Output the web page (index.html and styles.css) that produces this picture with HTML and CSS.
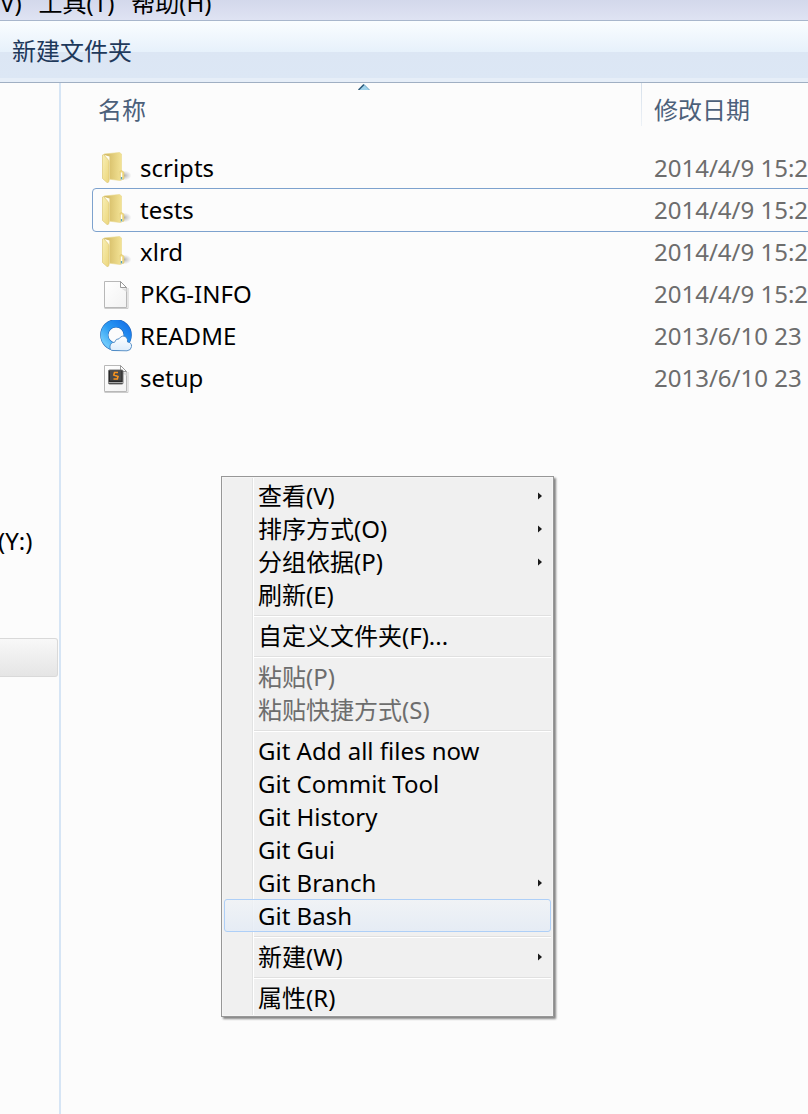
FILE: index.html
```html
<!DOCTYPE html>
<html lang="zh-CN">
<head>
<meta charset="utf-8">
<meta name="viewport" content="width=device-width, initial-scale=1">
<title>xlrd</title>
<link rel="stylesheet" href="styles.css">
</head>
<body>
<svg class="defs" width="0" height="0" aria-hidden="true">
  <defs>
    <linearGradient id="folderFront" x1="0" y1="0" x2="1" y2="1">
      <stop offset="0" stop-color="#f8efb4"/><stop offset="1" stop-color="#ecd67c"/>
    </linearGradient>
    <linearGradient id="folderBack" x1="0" y1="0" x2="1" y2="0">
      <stop offset="0" stop-color="#cdb25c"/><stop offset="0.4" stop-color="#dfc976"/><stop offset="1" stop-color="#f7e89c"/>
    </linearGradient>
    <radialGradient id="folderShade">
      <stop offset="0" stop-color="#777" stop-opacity="0.6"/><stop offset="1" stop-color="#999" stop-opacity="0"/>
    </radialGradient>
    <linearGradient id="page" x1="0" y1="0" x2="1" y2="1">
      <stop offset="0" stop-color="#fff"/><stop offset="1" stop-color="#f2f2f2"/>
    </linearGradient>
    <linearGradient id="ring" x1="0" y1="1" x2="1" y2="0">
      <stop offset="0.1" stop-color="#6cc8fb"/><stop offset="0.5" stop-color="#2a9bf3"/><stop offset="1" stop-color="#1672e8"/>
    </linearGradient>
    <linearGradient id="cloud" x1="0" y1="0" x2="0" y2="1">
      <stop offset="0" stop-color="#fff"/><stop offset="1" stop-color="#dcecfb"/>
    </linearGradient>
    <symbol id="icon-folder" viewBox="0 0 32 32">
      <ellipse cx="24" cy="23.500" rx="7.500" ry="5" fill="url(#folderShade)"/>
      <path d="M4 2L19.500 0.500L21.500 2V19L23.500 20V27L20 28.500L8 27Z" fill="url(#folderBack)" stroke="#ead88c" stroke-width="0.600"/>
      <path d="M4.500 3L9.500 4.500V27L8 28L5 26Z" fill="#fffdf0"/>
      <path d="M2.500 3L3.500 2.500L7.500 7Q9 8.500 9 10V29Q8.500 31 7 30.500L2.500 26.500Z" fill="url(#folderFront)" stroke="#dcc775" stroke-width="0.700"/>
      <path d="M20 19L22 18.500L24 20.500V27L20.500 28Z" fill="#efd983" stroke="#dcc066" stroke-width="0.500"/>
      <path d="M21.500 20.500V28" stroke="#fff" stroke-width="1.400"/>
      <path d="M21.500 25V27.500" stroke="#55a3b8" stroke-width="1.300"/>
    </symbol>
    <symbol id="icon-page" viewBox="0 0 32 32">
      <path d="M4.500 30.500H28V10" fill="none" stroke="#ccc"/>
      <path d="M4.500 3.500H20.500L26.500 9.500V29.500H4.500Z" fill="url(#page)" stroke="#b8b8b8"/>
      <path d="M20.500 3.500V9.500H26.500Z" fill="#fff" stroke="#999"/>
      <path d="M21.500 10.500H26.500V14Z" fill="#ddd"/>
    </symbol>
    <symbol id="icon-browser" viewBox="0 0 32 32">
      <circle cx="16" cy="15" r="11.700" fill="none" stroke="#1e62b6" stroke-width="8.200"/>
      <circle cx="16" cy="15" r="11.700" fill="none" stroke="url(#ring)" stroke-width="7.200"/>
      <path d="M13 30.500Q9.500 30.500 10 26Q11 22 14.500 22.300Q16 18.300 19 18.800Q22 14.500 26 17Q28 19 27.500 22Q31.800 22.500 31.600 26.500Q31 30.500 27 30.800Z" fill="url(#cloud)" stroke="#377abb" stroke-width="0.800"/>
    </symbol>
    <symbol id="icon-script" viewBox="0 0 32 32">
      <use href="#icon-page"/>
      <rect x="8.500" y="8" width="14.500" height="14" rx="1" fill="#282828" stroke="#777"/>
      <rect x="10" y="9" width="11.500" height="9.500" fill="#4a4a4a"/>
      <path d="M8.500 20.500H23" stroke="#aaa"/>
      <path d="M18 10.500H14.500L13.800 13L18 14.500L17.300 17H13.500" fill="none" stroke="#f7931e" stroke-width="1.600"/>
    </symbol>
    <symbol id="icon-arrow" viewBox="0 0 4 8">
      <path d="M0 0.500L4 4L0 7.500Z" fill="#1b1b1b"/>
    </symbol>
  </defs>
</svg>

<div class="explorer">
  <nav class="menubar">
    <button type="button">V)</button>
    <button type="button">工具(T)</button>
    <button type="button">帮助(H)</button>
  </nav>
  <div class="toolbar">
    <button type="button">新建文件夹</button>
  </div>
  <div class="panes">
    <aside class="sidebar">
      <a class="drive" href="#">(Y:)</a>
      <div class="drive-selected"></div>
    </aside>
    <main class="content">
      <svg class="sort-mark" width="12" height="6" viewBox="0 0 12 6" aria-hidden="true">
        <path d="M0.500 6L6 0.500L11.500 6Z" fill="#9fd3ec"/><path d="M0.500 6L6 0.500" stroke="#2c5878" stroke-width="1.500"/><path d="M6 0.500L11.500 6" stroke="#6fa3c4"/>
      </svg>
      <table class="files">
        <thead>
          <tr><th class="col-name"><span>名称</span></th><th class="col-date"><span>修改日期</span></th></tr>
        </thead>
        <tbody>
          <tr><td><div class="file"><svg><use href="#icon-folder"/></svg>scripts</div></td><td class="date">2014/4/9 15:2</td></tr>
          <tr class="focused"><td><div class="file"><svg><use href="#icon-folder"/></svg>tests</div></td><td class="date">2014/4/9 15:2</td></tr>
          <tr><td><div class="file"><svg><use href="#icon-folder"/></svg>xlrd</div></td><td class="date">2014/4/9 15:2</td></tr>
          <tr><td><div class="file"><svg><use href="#icon-page"/></svg>PKG-INFO</div></td><td class="date">2014/4/9 15:2</td></tr>
          <tr><td><div class="file"><svg><use href="#icon-browser"/></svg>README</div></td><td class="date">2013/6/10 23</td></tr>
          <tr><td><div class="file"><svg><use href="#icon-script"/></svg>setup</div></td><td class="date">2013/6/10 23</td></tr>
        </tbody>
      </table>

      <div class="context-menu" role="menu">
        <button type="button" role="menuitem">查看(V)<svg><use href="#icon-arrow"/></svg></button>
        <button type="button" role="menuitem">排序方式(O)<svg><use href="#icon-arrow"/></svg></button>
        <button type="button" role="menuitem">分组依据(P)<svg><use href="#icon-arrow"/></svg></button>
        <button type="button" role="menuitem">刷新(E)</button>
        <hr>
        <button type="button" role="menuitem">自定义文件夹(F)...</button>
        <hr>
        <button type="button" role="menuitem" disabled>粘贴(P)</button>
        <button type="button" role="menuitem" disabled>粘贴快捷方式(S)</button>
        <hr>
        <button type="button" role="menuitem">Git Add all files now</button>
        <button type="button" role="menuitem">Git Commit Tool</button>
        <button type="button" role="menuitem">Git History</button>
        <button type="button" role="menuitem">Git Gui</button>
        <button type="button" role="menuitem">Git Branch<svg><use href="#icon-arrow"/></svg></button>
        <button type="button" role="menuitem" class="active">Git Bash</button>
        <hr>
        <button type="button" role="menuitem">新建(W)<svg><use href="#icon-arrow"/></svg></button>
        <hr>
        <button type="button" role="menuitem">属性(R)</button>
      </div>
    </main>
  </div>
</div>
</body>
</html>
```
FILE: styles.css
```css
* { box-sizing: border-box; }

body {
  margin: 0;
  background: #fcfcfc;
  color: #000;
  font: 24px/32px "Noto Sans", "Noto Sans CJK SC", sans-serif;
}

.defs { position: absolute; }

button {
  margin: 0;
  padding: 0;
  border: 0;
  background: none;
  color: inherit;
  font: inherit;
  text-align: left;
  white-space: nowrap;
}

.explorer {
  display: flex;
  flex-direction: column;
  min-height: 100vh;
  overflow: hidden;
}

.menubar {
  display: flex;
  align-items: flex-end;
  gap: 17px;
  height: 21px;
  padding-bottom: 1px;
  overflow: hidden;
  border-bottom: 1px solid #a8b6cc;
  background: linear-gradient(#d3d8eb, #dfe3f3);
}

.toolbar {
  display: flex;
  align-items: center;
  height: 62px;
  padding: 0 12px 2px;
  border-bottom: 1px solid #a0afc3;
  background: linear-gradient(#fafdff, #e7f1fb 50%, #dce6f4 50%, #dce7f5 94%, #e6eef8 94%);
  color: #1e395b;
}

.panes { display: flex; flex: 1; }

.sidebar {
  flex: 0 0 61px;
  padding-top: 442px;
  border-right: 2px solid #d6e5f5;
}

.drive {
  display: block;
  margin-left: -2px;
  color: #000;
  text-decoration: none;
}

.drive-selected {
  height: 39px;
  margin: 81px 1px 0 0;
  border: 1px solid #d9d9d9;
  border-left: 0;
  border-radius: 0 3px 3px 0;
  background: linear-gradient(#f8f8f8, #e5e5e5);
}

.content {
  position: relative;
  flex: 1;
  min-width: 0;
  padding-left: 32px;
}

.sort-mark { position: absolute; left: 297px; top: 1px; }

.files {
  width: 100%;
  table-layout: fixed;
  border-collapse: collapse;
}

.files th {
  height: 64px;
  padding: 0;
  color: #4c607a;
  font-weight: 400;
  text-align: left;
  vertical-align: top;
}

.files th span {
  display: block;
  height: 43px;
  padding: 11px 0 0 5px;
}

.files .col-date { width: 167px; }

.files .col-date span {
  padding-left: 12px;
  border-left: 1px solid;
  border-image: linear-gradient(#d5dfea, #edf2f7) 1;
}

.files td { height: 42px; padding: 0; }

.files .date {
  padding-left: 13px;
  color: #6d6d6d;
  white-space: nowrap;
}

.file {
  display: flex;
  align-items: center;
  gap: 8px;
  padding-left: 7px;
}

.file svg { width: 32px; height: 32px; }

.focused { outline: 1px solid #7da2ce; border-radius: 3px 0 0 3px; }

.context-menu {
  position: absolute;
  left: 160px;
  top: 393px;
  width: 333px;
  padding: 2px;
  border: 1px solid #979797;
  background: linear-gradient(90deg, #e2e3e3 1px, #fff 1px 2px, transparent 2px) 30px 0 no-repeat, #f0f0f0;
  box-shadow: inset 0 0 0 1px #f5f5f5, 2px 2px 2px #858585;
}

.context-menu button {
  display: flex;
  align-items: center;
  justify-content: space-between;
  width: 100%;
  height: 33px;
  padding: 0 8px 0 33px;
  border: 1px solid transparent;
}

.context-menu button:disabled { color: #6d6d6d; }

.context-menu .active {
  border-color: #aecff7;
  border-radius: 3px;
  background: linear-gradient(#f0f3f7cc, #e3ebf6cc);
}

.context-menu svg { width: 4px; height: 8px; }

.context-menu hr {
  height: 2px;
  margin: 4px 0 2px 30px;
  border: 0;
  border-top: 1px solid #e0e0e0;
  background: #fff;
}
```
